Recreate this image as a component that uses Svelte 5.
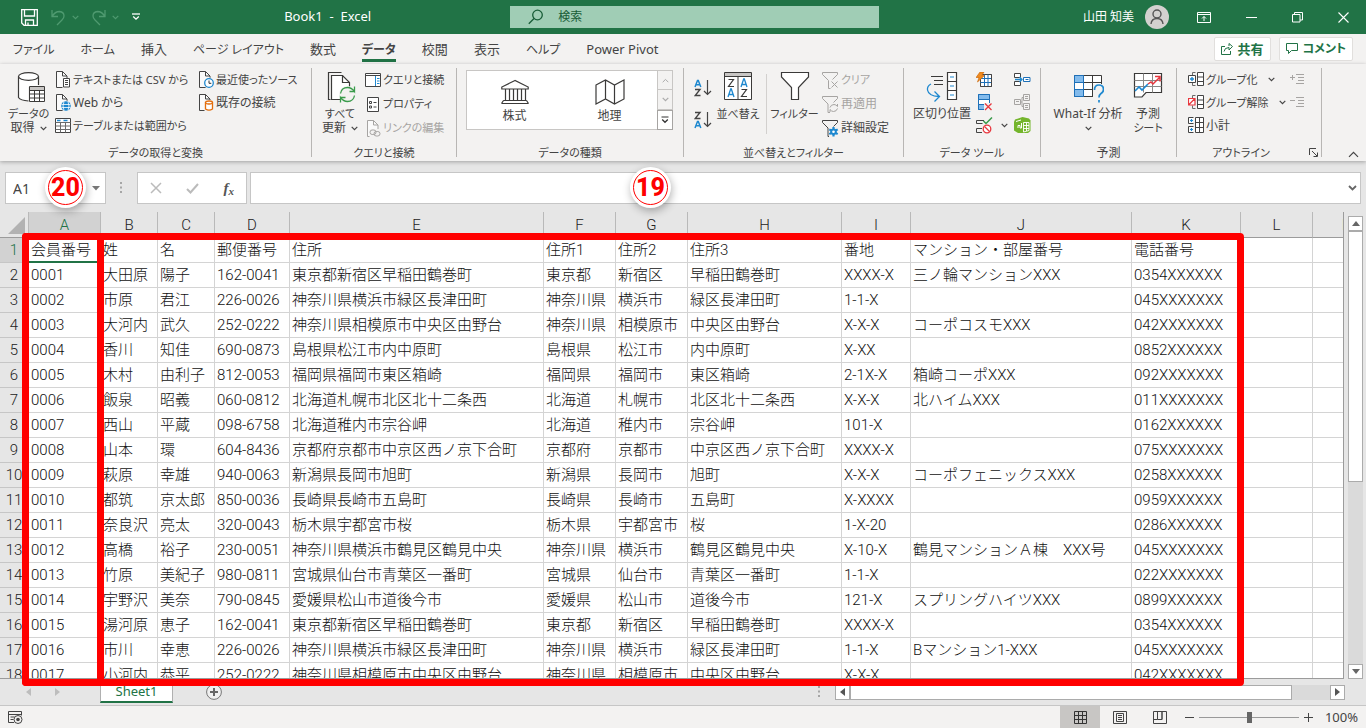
<script>
  const tabs = ['ファイル', 'ホーム', '挿入', 'ページ レイアウト', '数式', 'データ', '校閲', '表示', 'ヘルプ', 'Power Pivot'];
  const activeTab = 'データ';

  // Labels made mostly of kana are set one step smaller than kanji labels.
  const isKana = (s) => (s.match(/[ぁ-ヿ]/g) ?? []).length > s.length / 2;

  const columns = [
    ['A', 72], ['B', 57], ['C', 57], ['D', 75], ['E', 254], ['F', 72], ['G', 72],
    ['H', 154], ['I', 69], ['J', 221], ['K', 109], ['L', 72], ['M', 72]
  ];

  const rows = [
    ['会員番号', '姓', '名', '郵便番号', '住所', '住所1', '住所2', '住所3', '番地', 'マンション・部屋番号', '電話番号'],
    ['0001', '大田原', '陽子', '162-0041', '東京都新宿区早稲田鶴巻町', '東京都', '新宿区', '早稲田鶴巻町', 'XXXX-X', '三ノ輪マンションXXX', '0354XXXXXX'],
    ['0002', '市原', '君江', '226-0026', '神奈川県横浜市緑区長津田町', '神奈川県', '横浜市', '緑区長津田町', '1-1-X', '', '045XXXXXXX'],
    ['0003', '大河内', '武久', '252-0222', '神奈川県相模原市中央区由野台', '神奈川県', '相模原市', '中央区由野台', 'X-X-X', 'コーポコスモXXX', '042XXXXXXX'],
    ['0004', '香川', '知佳', '690-0873', '島根県松江市内中原町', '島根県', '松江市', '内中原町', 'X-XX', '', '0852XXXXXX'],
    ['0005', '木村', '由利子', '812-0053', '福岡県福岡市東区箱崎', '福岡県', '福岡市', '東区箱崎', '2-1X-X', '箱崎コーポXXX', '092XXXXXXX'],
    ['0006', '飯泉', '昭義', '060-0812', '北海道札幌市北区北十二条西', '北海道', '札幌市', '北区北十二条西', 'X-X-X', '北ハイムXXX', '011XXXXXXX'],
    ['0007', '西山', '平蔵', '098-6758', '北海道稚内市宗谷岬', '北海道', '稚内市', '宗谷岬', '101-X', '', '0162XXXXXX'],
    ['0008', '山本', '環', '604-8436', '京都府京都市中京区西ノ京下合町', '京都府', '京都市', '中京区西ノ京下合町', 'XXXX-X', '', '075XXXXXXX'],
    ['0009', '萩原', '幸雄', '940-0063', '新潟県長岡市旭町', '新潟県', '長岡市', '旭町', 'X-X-X', 'コーポフェニックスXXX', '0258XXXXXX'],
    ['0010', '都筑', '京太郎', '850-0036', '長崎県長崎市五島町', '長崎県', '長崎市', '五島町', 'X-XXXX', '', '0959XXXXXX'],
    ['0011', '奈良沢', '亮太', '320-0043', '栃木県宇都宮市桜', '栃木県', '宇都宮市', '桜', '1-X-20', '', '0286XXXXXX'],
    ['0012', '高橋', '裕子', '230-0051', '神奈川県横浜市鶴見区鶴見中央', '神奈川県', '横浜市', '鶴見区鶴見中央', 'X-10-X', '鶴見マンションＡ棟　XXX号', '045XXXXXXX'],
    ['0013', '竹原', '美紀子', '980-0811', '宮城県仙台市青葉区一番町', '宮城県', '仙台市', '青葉区一番町', '1-1-X', '', '022XXXXXXX'],
    ['0014', '宇野沢', '美奈', '790-0845', '愛媛県松山市道後今市', '愛媛県', '松山市', '道後今市', '121-X', 'スプリングハイツXXX', '0899XXXXXX'],
    ['0015', '湯河原', '恵子', '162-0041', '東京都新宿区早稲田鶴巻町', '東京都', '新宿区', '早稲田鶴巻町', 'XXXX-X', '', '0354XXXXXX'],
    ['0016', '市川', '幸恵', '226-0026', '神奈川県横浜市緑区長津田町', '神奈川県', '横浜市', '緑区長津田町', '1-1-X', 'Bマンション1-XXX', '045XXXXXXX'],
    ['0017', '小河内', '恭平', '252-0222', '神奈川県相模原市中央区由野台', '神奈川県', '相模原市', '中央区由野台', 'X-X-X', '', '042XXXXXXX']
  ];
</script>

{#snippet chevron()}
  <svg class="chev" width="7" height="5" viewBox="0 0 7 5"><path d="M.7 .8 3.5 3.6 6.3 .8" fill="none" stroke="currentColor" stroke-width="1.2" /></svg>
{/snippet}

{#snippet page(x)}
  <path d={`M${x} .5h6l4.500 4.500v11.500h-10.500z`} fill="#fafafa" stroke="currentColor" />
  <path d={`M${x + 6} .5v4.500h4.500`} fill="none" stroke="currentColor" />
{/snippet}

{#snippet icon(name)}
  {#if name === 'text'}
    <svg width="16" height="17" viewBox="0 0 16 17">
      {@render page(1.5)}
      <path d="M7.500 7h8v10h-8z" fill="#f3f2f1" />
      <path d="M8.500 7.500h6v8.500h-6z" fill="#fff" stroke="currentColor" />
      <path d="M10 9.500h3M10 11.500h3M10 13.500h3" stroke="currentColor" />
    </svg>
  {:else if name === 'web'}
    <svg width="16" height="17" viewBox="0 0 16 17">
      {@render page(1.5)}
      <circle cx="11" cy="12" r="5.500" fill="#f3f2f1" />
      <circle cx="11" cy="12" r="4.800" fill="#1e88cf" />
      <path d="M6.500 10.500h9M6.500 13.500h9M9 7.500q-2 4.500 0 9M13 7.500q2 4.500 0 9" stroke="#fff" stroke-width=".8" fill="none" />
    </svg>
  {:else if name === 'table'}
    <svg width="16" height="16" viewBox="0 0 16 16">
      <path d="M.5 .5h15v14h-15z" fill="#fff" stroke="currentColor" />
      <path d="M.5 4.500h15M.5 8h15M.5 11.500h15M5.500 4.500v10M10.500 4.500v10" stroke="#6b6b6b" />
      <path d="M2 2.500h3.500M8.500 2.500h4" stroke="#1e88cf" stroke-width="1.500" />
    </svg>
  {:else if name === 'recent'}
    <svg width="16" height="17" viewBox="0 0 16 17">
      {@render page(1.5)}
      <circle cx="11" cy="12" r="5.500" fill="#f3f2f1" />
      <circle cx="11" cy="12" r="4.300" fill="#fff" stroke="#1e88cf" stroke-width="1.300" />
      <path d="M11 9.500v2.800h2.300" fill="none" stroke="#333" />
    </svg>
  {:else if name === 'existing'}
    <svg width="16" height="17" viewBox="0 0 16 17">
      {@render page(1.5)}
      <path d="M6.500 6h9v11h-9z" fill="#f3f2f1" />
      <path d="M7.500 8.500v6.500q3.500 2.200 7 0v-6.500" fill="#fff" stroke="#e36c0a" stroke-width="1.300" />
      <ellipse cx="11" cy="8.500" rx="3.500" ry="1.500" fill="#fff" stroke="#e36c0a" stroke-width="1.300" />
    </svg>
  {:else if name === 'queries'}
    <svg width="16" height="14" viewBox="0 0 16 14">
      <path d="M.5 .5h15v13h-15z" fill="#fff" stroke="currentColor" />
      <path d="M.5 2.500h15" stroke="currentColor" />
      <path d="M10.500 3v10" stroke="#1e88cf" />
      <path d="M12 5.500h2.500M12 8h2.500M12 10.500h2.500" stroke="#1e88cf" stroke-width="1.200" />
    </svg>
  {:else if name === 'properties'}
    <svg width="16" height="15" viewBox="0 0 16 15">
      <path d="M2.500 .5h11v14h-11z" fill="#fff" stroke="currentColor" />
      <path d="M4.500 4.500h2v2h-2zM4.500 9h2v2h-2zM8.500 5.500h3M8.500 10h3" fill="none" stroke="currentColor" />
    </svg>
  {:else if name === 'links'}
    <svg width="16" height="17" viewBox="0 0 16 17">
      {@render page(2.5)}
      <path d="M4.500 9h11v8h-11z" fill="#f3f2f1" />
      <rect x="5" y="10" width="6" height="4.500" rx="2.200" fill="#f3f2f1" stroke="currentColor" />
      <rect x="9" y="11.500" width="6" height="4.500" rx="2.200" fill="none" stroke="currentColor" />
    </svg>
  {:else if name === 'clear'}
    <svg width="17" height="17" viewBox="0 0 17 17">
      <path d="M.5 .5h15v2l-5 5M.5 .5v2L6.500 8.500v8h2" fill="none" stroke="currentColor" />
      <path d="m9.500 9.500 6 6m0-6-6 6" stroke="currentColor" />
    </svg>
  {:else if name === 'reapply'}
    <svg width="17" height="17" viewBox="0 0 17 17">
      <path d="M.5 .5h15v2l-4 4M.5 .5v2L6 8v8.500h2" fill="none" stroke="currentColor" />
      <path d="M8 11.500q1-3 4-3 2 0 3.500 2V8m0 4.500q-1 3-4 3-2 0-3.500-2V16" fill="none" stroke="currentColor" />
    </svg>
  {:else if name === 'advanced'}
    <svg width="17" height="17" viewBox="0 0 17 17">
      <path d="M.5 .5h15v2l-4 4M.5 .5v2L6 8v8.500h1" fill="none" stroke="currentColor" />
      <path d="M11.500 7v9.500M7.300 9.400l8.400 4.700M7.300 14.100l8.400-4.700" stroke="#1e88cf" stroke-width="2.200" />
      <circle cx="11.500" cy="11.800" r="3.300" fill="#1e88cf" />
      <circle cx="11.500" cy="11.800" r="1.300" fill="#fff" />
    </svg>
  {:else if name === 'flash'}
    <svg width="17" height="16" viewBox="0 0 17 16">
      <path d="M4.500 2.500h11v12h-11z" fill="#fff" stroke="currentColor" />
      <path d="M4.500 6.500h11M4.500 10.500h11M8.500 2.500v12M12 2.500v12" stroke="#1e70b8" />
      <path d="M4.500 14.500h11v-12" fill="none" stroke="currentColor" />
      <path d="M4 0h4L6 3.500h2.500L1.500 10 3 5.500H0z" fill="#f08a1d" stroke="#c55f00" stroke-width=".6" />
    </svg>
  {:else if name === 'duplicates'}
    <svg width="17" height="17" viewBox="0 0 17 17">
      <path d="M2.500 .5h11v15h-11z" fill="#fff" stroke="#1e70b8" />
      <path d="M2.500 .5h11v5h-11zM2.500 10.500h6v5h-6z" fill="#83bbec" stroke="#1e70b8" />
      <path d="M8 9h8v8H8z" fill="#f3f2f1" />
      <path d="m9 9.500 6.500 6.500m0-6.500L9 16" stroke="#e8373e" stroke-width="1.300" />
    </svg>
  {:else if name === 'validation'}
    <svg width="17" height="17" viewBox="0 0 17 17">
      <path d="M8 3.500H.5v3h6M6 11.500H.5v4H6" fill="none" stroke="currentColor" />
      <path d="m7.500 4 2.500 2.500L16 .5" fill="none" stroke="#3a9b4b" stroke-width="1.500" />
      <circle cx="11" cy="12" r="3.800" fill="#fff" stroke="#e8373e" stroke-width="1.300" />
      <path d="m8.500 9.500 5 5" stroke="#e8373e" stroke-width="1.300" />
    </svg>
  {:else if name === 'consolidate'}
    <svg width="17" height="14" viewBox="0 0 17 14">
      <path d="M.5 .5h6v4h-6zM.5 8.500h6v4h-6z" fill="#fff" stroke="currentColor" />
      <path d="M1 6.500h7M5.500 4l2.500 2.500L5.500 9" stroke="#1e88cf" fill="none" stroke-width="1.300" />
      <path d="M9.500 4.500h6.500v4H9.500zM11.500 6.500h3" fill="#fff" stroke="#1e70b8" />
    </svg>
  {:else if name === 'relations'}
    <svg width="17" height="17" viewBox="0 0 17 17">
      <path d="M.5 5.500h6v5h-6zM9.500 .5h6v6h-6zM9.500 9.500h6v6h-6zM6.500 8h1.500V3.500h1.500M8 8v4.500h1.500M2 7.500h3M11 2.500h3M11 4.500h3M11 11.500h3M11 13.500h3" fill="none" stroke="#a6a4a2" />
    </svg>
  {:else if name === 'model'}
    <svg width="17" height="17" viewBox="0 0 17 17">
      <path d="M1 2.500 8.500 0 15 1.500l1.500 2V14L14 16H4L0 13.500V5z" fill="#74b52c" />
      <path d="M9.500 5.500h5.500v8l-5.500 1.500zM9.500 8.500h5.500M9.500 11.500h5.500M12.500 5.500v8.500" fill="none" stroke="#fff" stroke-width=".9" />
      <path d="M2 4.500 7 3M4 11V8.500h2v2.500h1.500V6" fill="none" stroke="#fff" />
    </svg>
  {:else if name === 'group' || name === 'ungroup'}
    <svg width="16" height="15" viewBox="0 0 16 15">
      <path d="M7.500 .5h-3v3M7.500 13.500h-3v-3" fill="none" stroke="#6b6b6b" />
      {#if name === 'group'}
        <path d="M.5 3.500h7v7h-7z" fill="#fff" stroke="currentColor" />
        <path d="M4 5v4M2 7h4" stroke="#1e88cf" stroke-width="1.400" />
      {:else}
        <path d="M.5 3.500h6.500v6.500H.5zM1 9.500l6-6" fill="#fff" stroke="#e8373e" stroke-width="1.200" />
      {/if}
      <path d="M9.500 .5h6v13h-6zM9.500 5h6M9.500 9.500h6" fill="#fff" stroke="currentColor" />
    </svg>
  {:else if name === 'subtotal'}
    <svg width="16" height="17" viewBox="0 0 16 17">
      <path d="M5.500 .5h-5v6h5M5.500 9.500h-5v6h5" fill="#fff" stroke="currentColor" />
      <path d="M3.500 2v3M2 3.500h3M3.500 11v3M2 12.500h3" stroke="#1e88cf" stroke-width="1.200" />
      <path d="M7.500 .5h8v15h-8zM7.500 5.500h8M7.500 10.500h8M11.500 .5v15" fill="#fff" stroke="currentColor" />
    </svg>
  {:else if name === 'detailplus' || name === 'detailminus'}
    <svg width="15" height="11" viewBox="0 0 15 11">
      <path d={name === 'detailplus' ? 'M0 3.500h5M2.500 1v5' : 'M0 3.500h5'} stroke="#a6a4a2" />
      <path d="M6 .5h8M8 3.500h6M8 6.500h6M6 9.500h8" stroke="#a6a4a2" />
    </svg>
  {:else if name === 'az' || name === 'za'}
    <svg width="18" height="18" viewBox="0 0 18 18">
      <path d={name === 'az' ? 'm1 8 2.500-6.500h.8L6.800 8M2 5.800h4' : 'm1 17 2.500-6.500h.8L6.800 17M2 14.800h4'} fill="none" stroke="#1e88cf" stroke-width="1.500" />
      <path d={name === 'az' ? 'M1 10.500h5L1.200 16.500h5.300' : 'M1 1.500h5L1.200 7.500h5.300'} fill="none" stroke="currentColor" stroke-width="1.400" />
      <path d="M13.500 1v14.500M10 12l3.500 3.500L17 12" fill="none" stroke="currentColor" stroke-width="1.200" />
    </svg>
  {/if}
{/snippet}

{#snippet small(name, label, off = false, drop = false)}
  <button class="small" class:off disabled={off}>
    <span class="ico">{@render icon(name)}</span>
    <span class:kana={isKana(label)}>{label}</span>
    {#if drop}<span class="gap">{@render chevron()}</span>{/if}
  </button>
{/snippet}

{#snippet caption(label)}
  <h2 class:kana={isKana(label)}>{label}</h2>
{/snippet}

<div class="app">
  <header class="title">
    <div class="side quick">
      <button aria-label="上書き保存">
        <svg width="17" height="17" viewBox="0 0 17 17"><path d="M.7 .7h15.600v15.600H3L.7 14zM3.500 1v6h10V1M4.500 16v-5h8v5M7 16v-2.500" fill="none" stroke="#fff" stroke-width="1.300" /></svg>
      </button>
      <button class="dim first" aria-label="元に戻す">
        <svg width="15" height="17" viewBox="0 0 15 17"><path d="M1 1v6.500h6M1 7.500Q4 2.500 8.500 2.500 13 3 13 7q0 2-2 4l-5 5" fill="none" stroke="currentColor" stroke-width="1.300" /></svg>
        {@render chevron()}
      </button>
      <button class="dim" aria-label="やり直し">
        <svg width="15" height="17" viewBox="0 0 15 17"><path d="M14 1v6.500H8M14 7.500Q11 2.500 6.500 2.500 2 3 2 7q0 2 2 4l5 5" fill="none" stroke="currentColor" stroke-width="1.300" /></svg>
        {@render chevron()}
      </button>
      <button class="custom" aria-label="クイック アクセスのカスタマイズ">
        <svg width="8" height="8" viewBox="0 0 8 8"><path d="M0 1h8" stroke="#fff" stroke-width="1.300" /><path d="m1.200 3.500 2.800 2.700 2.800-2.700" fill="none" stroke="#fff" stroke-width="1.300" /></svg>
      </button>
      <h1>Book1&nbsp; -&nbsp; Excel</h1>
    </div>
    <label class="search">
      <svg width="16" height="16" viewBox="0 0 16 16"><circle cx="9.500" cy="6" r="4.800" fill="none" stroke="#185c37" stroke-width="1.300" /><path d="M6 9.500 .8 14.800" stroke="#185c37" stroke-width="1.300" /></svg>
      <input type="text" placeholder="検索" aria-label="検索" />
    </label>
    <div class="side user">
      <span>山田 知美</span>
      <svg width="24" height="24" viewBox="0 0 24 24"><circle cx="12" cy="12" r="12" fill="#d3d1cf" /><circle cx="12" cy="9" r="4" fill="none" stroke="#555" stroke-width="1.400" /><path d="M6 19q.5-5.500 6-5.500t6 5.500" fill="none" stroke="#555" stroke-width="1.400" /></svg>
      <button aria-label="リボンの表示オプション"><svg width="14" height="11" viewBox="0 0 14 11"><path d="M.5 .5h13v10H.5zM.5 2.500h13M7 9V4.500M5 6.500l2-2 2 2" fill="none" stroke="#fff" /></svg></button>
      <button aria-label="最小化"><svg width="11" height="11" viewBox="0 0 11 11"><path d="M0 5.500h11" stroke="#fff" /></svg></button>
      <button aria-label="元に戻す（縮小）"><svg width="11" height="11" viewBox="0 0 11 11"><path d="M.5 2.500h7.500V10H.5zM2.500 2.500v-2h8v7.500H8" fill="none" stroke="#fff" /></svg></button>
      <button aria-label="閉じる"><svg width="11" height="11" viewBox="0 0 11 11"><path d="m.5 .5 10 10m0-10-10 10" stroke="#fff" stroke-width="1.100" /></svg></button>
    </div>
  </header>

  <nav class="tabs">
    {#each tabs as tab}
      <button class:active={tab === activeTab} class:narrow={isKana(tab)}>{tab}</button>
    {/each}
    <span class="grow"></span>
    <button class="pill">
      <svg width="12" height="12" viewBox="0 0 12 12"><path d="M4 3.500H.5v8h9V8M3 8.500Q3.500 4.500 8 4.500V7l3.500-3.500L8 .5V3" fill="none" stroke="currentColor" /></svg>共有
    </button>
    <button class="pill narrow">
      <svg width="12" height="12" viewBox="0 0 12 12"><path d="M.5 .5h11v7H5.500l-3 3v-3h-2z" fill="none" stroke="currentColor" /></svg>コメント
    </button>
  </nav>

  <div class="ribbon">
    <section class="g1">
      <div class="body">
        <button class="big get">
          <svg width="30" height="32" viewBox="0 0 30 32">
            <path d="M3 6h19v9H12v14q-7 0-9-3z" fill="#fff" />
            <path d="M2.500 4.500v21q2 3 10 3.500M22.500 4.500V13" fill="none" stroke="#3b3a39" stroke-width="1.200" />
            <ellipse cx="12.500" cy="4.500" rx="10" ry="3.800" fill="#fff" stroke="#3b3a39" stroke-width="1.200" />
            <path d="M13.500 14.500h15v15h-15z" fill="#fff" stroke="#3b3a39" />
            <path d="M14 15h14v3H14z" fill="#c8c6c4" />
            <path d="M13.500 18.500h15M13.500 22h15M13.500 26h15M18.500 18.500v11M23.500 18.500v11" stroke="#3b3a39" />
          </svg>
          <span class="kana">データの</span><span>取得 {@render chevron()}</span>
        </button>
        <div class="col tight c1">
          {@render small('text', 'テキストまたは CSV から')}
          {@render small('web', 'Web から')}
          {@render small('table', 'テーブルまたは範囲から')}
        </div>
        <div class="col tight">
          {@render small('recent', '最近使ったソース')}
          {@render small('existing', '既存の接続')}
        </div>
      </div>
      {@render caption('データの取得と変換')}
    </section>

    <section class="g2">
      <div class="body">
        <button class="big refresh">
          <svg width="30" height="32" viewBox="0 0 30 32">
            <path d="M3.500 27.500h-2V.5h13" fill="none" stroke="#3b3a39" stroke-width="1.200" />
            <path d="M4.500 3.500h11l7 7v17H4.500z" fill="#fff" stroke="#3b3a39" stroke-width="1.200" />
            <path d="M15.500 3.500v7h7" fill="none" stroke="#3b3a39" stroke-width="1.200" />
            <circle cx="20.500" cy="22.500" r="8.500" fill="#f3f2f1" />
            <path d="M13.500 21.500q1-6 7-6 4 0 7 4v-5M27.500 19.500h-5M27.500 23.500q-1 6-7 6-4 0-7-4v5M13.500 25.500h5" fill="none" stroke="#3a9b4b" stroke-width="1.300" />
          </svg>
          <span class="kana">すべて</span><span>更新 {@render chevron()}</span>
        </button>
        <div class="col">
          {@render small('queries', 'クエリと接続')}
          {@render small('properties', 'プロパティ')}
          {@render small('links', 'リンクの編集', true)}
        </div>
      </div>
      {@render caption('クエリと接続')}
    </section>

    <section class="g3">
      <div class="body">
        <div class="gallery">
          <button>
            <svg width="28" height="26" viewBox="0 0 28 26"><path d="M14 1.500.8 8v2h26.400V8zM4.500 10v11M8.500 10v11M12.500 10v11M16.500 10v11M20.500 10v11M24.500 10v11M2.500 21.500h23M.5 24.500h27M2.500 21.500l-2 3M25.500 21.500l2 3" fill="none" stroke="#3b3a39" stroke-width="1.200" /></svg>
            <span>株式</span>
          </button>
          <button>
            <svg width="30" height="26" viewBox="0 0 30 26"><path d="M1 6 10.500 1l9 5L29 1v19l-9.500 5-9-5L1 25zM10.500 1v19M19.500 6v19" fill="none" stroke="#3b3a39" stroke-width="1.200" /></svg>
            <span>地理</span>
          </button>
          <div class="spin">
            <button aria-label="前の行" disabled><svg width="7" height="5" viewBox="0 0 7 5"><path d="M.7 4.200 3.500 1.400l2.800 2.800" fill="none" stroke="currentColor" /></svg></button>
            <button aria-label="次の行" disabled>{@render chevron()}</button>
            <button aria-label="その他" class="more"><svg width="8" height="8" viewBox="0 0 8 8"><path d="M.5 1h7" stroke="#333" /><path d="M1.200 3.500 4 6.300l2.800-2.800" fill="none" stroke="#333" stroke-width="1.300" /></svg></button>
          </div>
        </div>
      </div>
      {@render caption('データの種類')}
    </section>

    <section class="g4">
      <div class="body">
        <div class="col order">
          <button aria-label="昇順">{@render icon('az')}</button>
          <button aria-label="降順">{@render icon('za')}</button>
        </div>
        <button class="big sort">
          <svg width="30" height="32" viewBox="0 0 30 32">
            <path d="M1.500 .5h27v27h-27z" fill="#fff" stroke="#3b3a39" />
            <path d="M2 1h26v3H2z" fill="#c8c6c4" />
            <path d="M1.500 4.500h27M15 4.500v23" stroke="#3b3a39" />
            <path d="M5.500 7.500h5L5.500 14.500h5.500M18.500 17.500h5L18.500 24.500h5.500" fill="none" stroke="#3b3a39" stroke-width="1.200" />
            <path d="m5 25 2.700-8h.6L11 25M6 22.500h4M18 15l2.700-8h.6L24 15M19 12.500h4" fill="none" stroke="#1e88cf" stroke-width="1.300" />
          </svg>
          <span class="kana">並べ替え</span>
        </button>
        <i class="line"></i>
        <button class="big filter">
          <svg width="30" height="32" viewBox="0 0 30 32"><path d="M1.500 .5h27v4.500L18.500 15.500v12h-7v-12L1.500 5z" fill="#fff" stroke="#3b3a39" stroke-width="1.200" /></svg>
          <span class="kana">フィルター</span>
        </button>
        <div class="col wide">
          {@render small('clear', 'クリア', true)}
          {@render small('reapply', '再適用', true)}
          {@render small('advanced', '詳細設定')}
        </div>
      </div>
      {@render caption('並べ替えとフィルター')}
    </section>

    <section class="g5">
      <div class="body">
        <button class="big split">
          <svg width="32" height="32" viewBox="0 0 32 32">
            <path d="M5 4.500h12M8 8.500h9M8 12.500h9M21.500 .5h9v27h-9zM21.500 9.500h9M21.500 18.500h9" fill="#fff" stroke="#3b3a39" stroke-width="1.200" />
            <path d="M24 5h4M24 14h4M24 23h4" stroke="#1e88cf" stroke-width="1.200" />
            <path d="M5 12Q1 14 1.500 18q1 6 11.500 6.500M8.500 19.500l5 5-5 5" fill="none" stroke="#1e88cf" stroke-width="1.300" />
          </svg>
          <span>区切り位置</span>
        </button>
        <div class="col tight tools">
          <button aria-label="フラッシュ フィル">{@render icon('flash')}</button>
          <button aria-label="重複の削除">{@render icon('duplicates')}</button>
          <button aria-label="データの入力規則">{@render icon('validation')}<span class="gap">{@render chevron()}</span></button>
        </div>
        <div class="col tight">
          <button aria-label="統合">{@render icon('consolidate')}</button>
          <button aria-label="リレーションシップ" disabled>{@render icon('relations')}</button>
          <button aria-label="データ モデルの管理">{@render icon('model')}</button>
        </div>
      </div>
      {@render caption('データ ツール')}
    </section>

    <section class="g6">
      <div class="body">
        <button class="big whatif">
          <svg width="32" height="32" viewBox="0 0 32 32">
            <path d="M2.500 3.500h27v21h-27z" fill="#fff" stroke="#3b3a39" />
            <path d="M2.500 3.500h9v7h-9zM2.500 17.500h9v7h-9z" fill="#83bbec" />
            <path d="M2.500 10.500h27M2.500 17.500h27M20.500 3.500v21" stroke="#3b3a39" />
            <path d="M2.500 3.500h9v21h-9zM2.500 10.500h9M2.500 17.500h9" fill="none" stroke="#1e70b8" />
            <path d="M21 12h11v18H21z" fill="#f3f2f1" />
            <path d="M22.500 18q0-5 4.500-5t4.500 4.500q0 2.500-2.500 4-2 1.500-2 4M27 28v2.500" fill="none" stroke="#1e88cf" stroke-width="1.700" />
          </svg>
          <span>What-If 分析</span><span>{@render chevron()}</span>
        </button>
        <button class="big forecast">
          <svg width="30" height="32" viewBox="0 0 30 32">
            <path d="M1.500 1.500h27v19H13l-4 4.500H1.500z" fill="#fff" stroke="#3b3a39" stroke-width="1.200" />
            <path d="M1.500 8.500h27M1.500 14.500h27M10.500 1.500v19M19.500 1.500v19" stroke="#8a8886" />
            <path d="m2 19 4-4 3 3 6-6" fill="none" stroke="#1e88cf" stroke-width="1.600" />
            <path d="m15 12 3-2 2 2 7-7M22 4.500h5v5" fill="none" stroke="#e8373e" stroke-width="1.500" />
          </svg>
          <span>予測</span><span class="kana">シート</span>
        </button>
      </div>
      {@render caption('予測')}
    </section>

    <section class="g7">
      <div class="body">
        <div class="col tight outline">
          {@render small('group', 'グループ化', false, true)}
          {@render small('ungroup', 'グループ解除', false, true)}
          {@render small('subtotal', '小計')}
        </div>
        <div class="col tight">
          <button aria-label="詳細データの表示" disabled>{@render icon('detailplus')}</button>
          <button aria-label="詳細を表示しない" disabled>{@render icon('detailminus')}</button>
        </div>
      </div>
      {@render caption('アウトライン')}
      <button class="launch" aria-label="アウトラインの設定"><svg width="9" height="9" viewBox="0 0 9 9"><path d="M.5 7V.5H7M3 3l5 5M8.500 4.500v4h-4" fill="none" stroke="#444" /></svg></button>
    </section>
    <button class="collapse" aria-label="リボンを折りたたむ"><svg width="11" height="7" viewBox="0 0 11 7"><path d="m1 5.800 4.500-4.500L10 5.800" fill="none" stroke="#444" stroke-width="1.200" /></svg></button>
  </div>

  <div class="formula">
    <label class="name">
      <input value="A1" aria-label="名前ボックス" />
      <svg width="8" height="5" viewBox="0 0 8 5"><path d="M0 0h8L4 4.500z" fill="#777" /></svg>
      <b class="badge twenty">20</b>
    </label>
    <svg class="dots" width="3" height="12" viewBox="0 0 3 12"><path d="M0 0h2v2H0zM0 4.500h2v2H0zM0 9h2v2H0z" fill="#a6a6a6" /></svg>
    <div class="fx">
      <button aria-label="キャンセル"><svg width="12" height="12" viewBox="0 0 12 12"><path d="m1 1 10 10M11 1 1 11" stroke="#bbb" stroke-width="1.500" /></svg></button>
      <button aria-label="入力"><svg width="13" height="11" viewBox="0 0 13 11"><path d="M1 6 4.500 9.500 12 1" fill="none" stroke="#bbb" stroke-width="2" /></svg></button>
      <button class="fn"><em>f</em><sub>x</sub></button>
    </div>
    <label class="bar">
      <input aria-label="数式バー" />
      <svg width="9" height="6" viewBox="0 0 9 6"><path d="m1 1 3.500 3.500L8 1" fill="none" stroke="#666" stroke-width="1.800" /></svg>
      <b class="badge nineteen">19</b>
    </label>
  </div>

  <main class="sheet">
    <div class="grid">
      <table>
        <colgroup>
          <col style="width: 29px" />
          {#each columns as [name, width]}<col style={`width: ${width}px`} />{/each}
        </colgroup>
        <thead>
          <tr>
            <th class="corner"><svg width="17" height="17" viewBox="0 0 17 17"><path d="M17 0v17H0z" fill="#b2b2b2" /></svg></th>
            {#each columns as [name]}<th class:sel={name === 'A'}>{name}</th>{/each}
          </tr>
        </thead>
        <tbody>
          {#each rows as row, r}
            <tr>
              <th class:sel={r === 0}>{r + 1}</th>
              {#each columns as _, c}<td class:cursor={r === 0 && c === 0}>{row[c] ?? ''}</td>{/each}
            </tr>
          {/each}
        </tbody>
      </table>
    </div>
    <div class="vbar">
      <button aria-label="上へ"><svg width="8" height="5" viewBox="0 0 8 5"><path d="M0 5h8L4 0z" fill="#666" /></svg></button>
      <div class="vtrack"><i></i></div>
      <button aria-label="下へ"><svg width="8" height="5" viewBox="0 0 8 5"><path d="M0 0h8L4 5z" fill="#666" /></svg></button>
    </div>
    <div class="mark all"></div>
    <div class="mark key"></div>
  </main>

  <div class="bottom">
    <div class="sheets">
      <button class="nav" aria-label="前のシート"><svg width="5" height="8" viewBox="0 0 5 8"><path d="M5 0v8L0 4z" fill="#bdbdbd" /></svg></button>
      <button class="nav" aria-label="次のシート"><svg width="5" height="8" viewBox="0 0 5 8"><path d="M0 0v8l5-4z" fill="#bdbdbd" /></svg></button>
      <button class="tab">Sheet1</button>
      <button class="add" aria-label="新しいシート"><svg width="16" height="16" viewBox="0 0 16 16"><circle cx="8" cy="8" r="7.400" fill="#f0f0f0" stroke="#777" /><path d="M8 4v8M4 8h8" stroke="#666" stroke-width="2" /></svg></button>
    </div>
    <svg class="dots" width="3" height="12" viewBox="0 0 3 12"><path d="M0 0h2v2H0zM0 4.500h2v2H0zM0 9h2v2H0z" fill="#a6a6a6" /></svg>
    <div class="hbar">
      <button aria-label="左へ"><svg width="5" height="8" viewBox="0 0 5 8"><path d="M5 0v8L0 4z" fill="#555" /></svg></button>
      <div class="htrack"><i></i></div>
      <button aria-label="右へ"><svg width="5" height="8" viewBox="0 0 5 8"><path d="M0 0v8l5-4z" fill="#555" /></svg></button>
    </div>
  </div>

  <footer>
    <button class="macro" aria-label="マクロの記録"><svg width="15" height="13" viewBox="0 0 15 13"><path d="M6 11.500H.5V.5h13v4M.5 3.500h13M2.500 6h4M2.500 8.500h3" fill="none" stroke="#444" /><circle cx="10" cy="8.500" r="4" fill="#f3f2f1" stroke="#444" /><circle cx="10" cy="8.500" r="1.800" fill="#444" /></svg></button>
    <span class="grow"></span>
    <button class="view on" aria-label="標準"><svg width="13" height="13" viewBox="0 0 13 13"><path d="M.5 .5h12v12H.5zM.5 4.500h12M.5 8.500h12M4.500 .5v12M8.500 .5v12" fill="none" stroke="#333" /></svg></button>
    <button class="view" aria-label="ページ レイアウト"><svg width="14" height="13" viewBox="0 0 14 13"><path d="M.5 .5h13v12H.5zM3.500 2.500h7v8h-7zM5 4.500h4M5 6.500h4M5 8.500h4" fill="none" stroke="#444" /></svg></button>
    <button class="view" aria-label="改ページ プレビュー"><svg width="14" height="13" viewBox="0 0 14 13"><path d="M.5 .5h13v12H.5zM4.500 .5v8h4.500v-8M.5 8.500h4M9 .5v8" fill="none" stroke="#444" /></svg></button>
    <button class="zoom" aria-label="縮小"><svg width="9" height="9" viewBox="0 0 9 9"><path d="M0 4.500h9" stroke="#444" /></svg></button>
    <input type="range" min="0" max="100" value="50" aria-label="ズーム" />
    <button class="zoom" aria-label="拡大"><svg width="9" height="9" viewBox="0 0 9 9"><path d="M0 4.500h9M4.500 0v9" stroke="#444" /></svg></button>
    <span class="pct">100%</span>
  </footer>
</div>

<style>
  :global(body) { margin: 0; overflow: hidden; }
  .app {
    display: flex; flex-direction: column; height: 100vh; background: #e6e6e6; color: #444;
    font: 12px/14px "Noto Sans", "Noto Sans CJK JP", sans-serif;
    font-feature-settings: "palt" 1;
    white-space: nowrap;
  }
  button, input { font: inherit; color: inherit; background: none; border: 0; margin: 0; padding: 0; font-feature-settings: inherit; }
  button { display: flex; align-items: center; white-space: nowrap; }
  input { min-width: 0; outline: 0; }
  svg { display: block; flex: none; }
  h1, h2 { margin: 0; font-weight: 400; }
  .grow { flex: 1; }

  .title { display: flex; align-items: center; flex: none; height: 34px; background: #217346; color: #fff; }
  .side { display: flex; align-items: center; box-sizing: border-box; }
  .quick { flex: 51 1 0; padding-left: 21px; }
  .quick button { gap: 6px; margin-right: 12px; }
  .quick .first { margin-left: 1px; }
  .quick .dim { color: #4f9a70; }
  .quick .custom { margin-left: 1px; }
  .quick h1 { flex: 1; margin-right: 139px; padding-bottom: 2px; text-align: right; font-size: 13px; line-height: 18px; }
  .search { display: flex; align-items: center; gap: 14px; flex: none; width: 27%; height: 22px; padding-left: 18px; box-sizing: border-box; background: #a0cdb5; }
  .search input { flex: 1; }
  .search input::placeholder { color: #185c37; opacity: 1; }
  .user { flex: 49 1 0; justify-content: flex-end; padding-right: 17px; }
  .user > svg { margin-left: 11px; }
  .user button { margin-left: 35px; }
  .user svg + button { margin-left: 28px; }

  .tabs { display: flex; align-items: center; flex: none; height: 30px; padding: 0 13px; background: #f3f2f1; font-size: 13px; }
  .tabs > button { height: 26px; margin-right: 26px; border-top: 3px solid transparent; border-bottom: 3px solid transparent; box-sizing: border-box; }
  .tabs > .narrow { padding-top: 2px; font-size: 12px; }
  .tabs > .active { font-weight: 700; border-bottom-color: #217346; }
  .tabs > .pill { height: 24px; margin: 0 0 0 8px; padding: 0 6px; gap: 5px; border: 1px solid #e1dfdd; border-radius: 2px; background: #fff; color: #217346; font-weight: 700; }

  .ribbon { display: flex; flex: none; height: 97px; background: #f3f2f1; box-shadow: 0 1px 4px rgba(0, 0, 0, .3); position: relative; }
  section { display: flex; flex-direction: column; flex: none; position: relative; margin: 4px 0; box-sizing: border-box; border-right: 1px solid #b8b6b4; }
  .g1 { width: 312px; }
  .g2 { width: 145px; }
  .g3 { width: 227px; }
  .g4 { width: 220px; }
  .g5 { width: 137px; }
  .g6 { width: 136px; }
  .g7 { width: 145px; padding-right: 16px; }
  .body { display: flex; flex: 1; }
  h2 { font-size: 12px; line-height: 8px; text-align: center; }
  .kana { font-size: 11px; }
  .big { flex-direction: column; align-items: center; flex: none; padding-top: 4px; align-self: flex-start; }
  .big > svg { margin-bottom: 3px; }
  .big > span { line-height: 14px; min-height: 14px; display: flex; align-items: center; gap: 5px; }
  .get { width: 55px; padding-left: 2px; }
  .refresh { width: 53px; padding-left: 3px; }
  .get > svg, .refresh > svg { margin-left: 4px; }
  .col { display: flex; flex-direction: column; }
  .col > button { height: 24px; }
  .col.tight > button { height: 23px; }
  .c1 { width: 143px; }
  .small { gap: 2px; }
  .small .ico { display: flex; justify-content: center; width: 16px; }
  .wide .small { gap: 3px; }
  .off { color: #a6a4a2; }
  .gap { margin-left: 8px; }
  .gallery { display: flex; width: 207px; height: 60px; margin: 2px 0 0 9px; border: 1px solid #c8c6c4; box-sizing: border-box; background: #fff; }
  .gallery > button { flex: 1; flex-direction: column; justify-content: center; gap: 4px; padding-top: 2px; }
  .spin { display: flex; flex-direction: column; width: 14px; border-left: 1px solid #c8c6c4; }
  .spin button { flex: 1; justify-content: center; border-bottom: 1px solid #c8c6c4; color: #aaa; background: #f3f2f1; }
  .spin .more { border: 1px solid #a6a4a2; margin: 0 -1px -1px; background: #fff; }
  .order { padding-left: 10px; padding-top: 4px; }
  .order > button { height: 32px; }
  .sort { width: 52px; }
  .line { width: 1px; height: 60px; margin: 6px 0 0 2px; background: #d2d0ce; }
  .filter { width: 55px; }
  .split { width: 72px; padding-left: 4px; box-sizing: border-box; }
  .tools { width: 38px; }
  .whatif { width: 80px; margin-left: 7px; }
  .forecast { width: 40px; }
  .outline { width: 114px; padding-left: 11px; box-sizing: content-box; margin-right: -6px; }
  .launch { position: absolute; right: 3px; bottom: 0; }
  .collapse { margin: auto 0 3px 26px; }

  .formula { display: flex; align-items: stretch; flex: none; height: 32px; margin: 11px 5px 0; font-size: 14px; }
  .name, .fx, .bar { display: flex; align-items: center; position: relative; box-sizing: border-box; border: 1px solid #c6c6c6; background: #fff; }
  .name { width: 101px; padding: 0 5px 0 7px; }
  .name input { flex: 1; }
  .formula > .dots { align-self: center; margin: 0 14px; }
  .fx { width: 110px; padding: 0 12px; justify-content: space-between; }
  .fn { font: 700 15px/14px "Liberation Serif", serif; color: #555; }
  .fn sub { font-size: 11px; font-style: italic; line-height: 8px; align-self: flex-end; }
  .bar { flex: 1; margin-left: 3px; padding: 0 3px; }
  .bar input { flex: 1; }
  .badge {
    position: absolute; display: flex; align-items: center; justify-content: center; box-sizing: border-box;
    width: 35px; height: 35px; border: 1px solid #f00; border-radius: 50%; background: #fff; color: #f00;
    box-shadow: 0 0 0 3px #fff, 1px 3px 8px 3px rgba(0, 0, 0, .3);
    font: 800 25px/28px Roboto, sans-serif; z-index: 2;
  }
  .twenty { left: 42px; top: -3px; }
  .nineteen { left: 382px; top: -3px; }

  .sheet { display: flex; flex: 1; min-height: 0; position: relative; margin-top: 8px; }
  .grid { flex: 1; min-width: 0; overflow: hidden; border-right: 1px solid #9b9b9b; border-bottom: 1px solid #9b9b9b; }
  table { table-layout: fixed; border-collapse: separate; border-spacing: 0; width: 1385px; color: #111; font: 300 15px/24px Roboto, "Noto Sans CJK JP", sans-serif; font-feature-settings: normal; }
  td, th { padding: 0 0 0 2px; height: 24px; border-right: 1px solid #d4d4d4; border-bottom: 1px solid #d4d4d4; }
  td { background: #fff; }
  th { padding-left: 0; background: #e6e6e6; text-align: center; font-weight: inherit; color: #222; }
  thead th { height: 25px; border-right-color: #b9b9b9; border-bottom-color: #9b9b9b; }
  tbody th { border-right-color: #b9b9b9; border-bottom-color: #c6c6c6; }
  .corner svg { margin: 2px 0 0 8px; }
  th.sel { background: #d2d2d2; color: #217346; }
  td.cursor { border-bottom-color: #217346; box-shadow: inset 0 -1px #217346; }
  .vbar { display: flex; flex-direction: column; width: 15px; margin: 4px 3px 0 4px; }
  .vbar button, .hbar button { justify-content: center; flex: none; box-sizing: border-box; width: 15px; height: 15px; border: 1px solid #ababab; background: #fff; }
  .vtrack { flex: 1; background: #dadada; }
  .vtrack i { display: block; height: 58%; box-sizing: border-box; border: 1px solid #ababab; background: #fff; }
  .mark { position: absolute; box-sizing: border-box; top: 21px; bottom: -7px; left: 22px; border: 7px solid #f00; border-radius: 4px; z-index: 2; pointer-events: none; }
  .all { width: 1222px; }
  .key { width: 82px; }

  .bottom { display: flex; align-items: center; flex: none; height: 26px; padding-right: 21px; }
  .sheets { display: flex; align-items: center; flex: 1; align-self: stretch; padding-left: 26px; }
  .nav { margin-right: 24px; }
  .tab { justify-content: center; align-self: flex-start; width: 73px; height: 24px; padding-top: 2px; margin-left: 16px; box-sizing: border-box; border: 1px solid #b0b0b0; border-top: 0; border-bottom: 2px solid #217346; background: #fff; color: #217346; font-size: 13px; }
  .add { margin-left: 33px; }
  .hbar { display: flex; width: 510px; margin-left: 14px; }
  .htrack { flex: 1; background: #dadada; }
  .htrack i { display: block; width: 92%; height: 15px; box-sizing: border-box; border: 1px solid #ababab; background: #fff; }

  footer { display: flex; align-items: center; flex: none; height: 23px; box-sizing: border-box; padding: 0 8px; border-top: 1px solid #c6c6c6; background: #f3f2f1; }
  .view { justify-content: center; width: 40px; height: 22px; }
  .on { background: #c8c6c4; }
  .zoom { margin: 0 5px; }
  input[type="range"] { appearance: none; width: 100px; height: 16px; background: linear-gradient(#999, #999) center / 100% 1px no-repeat; }
  input[type="range"]::-webkit-slider-thumb { appearance: none; width: 5px; height: 11px; background: #666; }
  .pct { width: 34px; margin-left: 6px; text-align: right; font-size: 13px; }
</style>
